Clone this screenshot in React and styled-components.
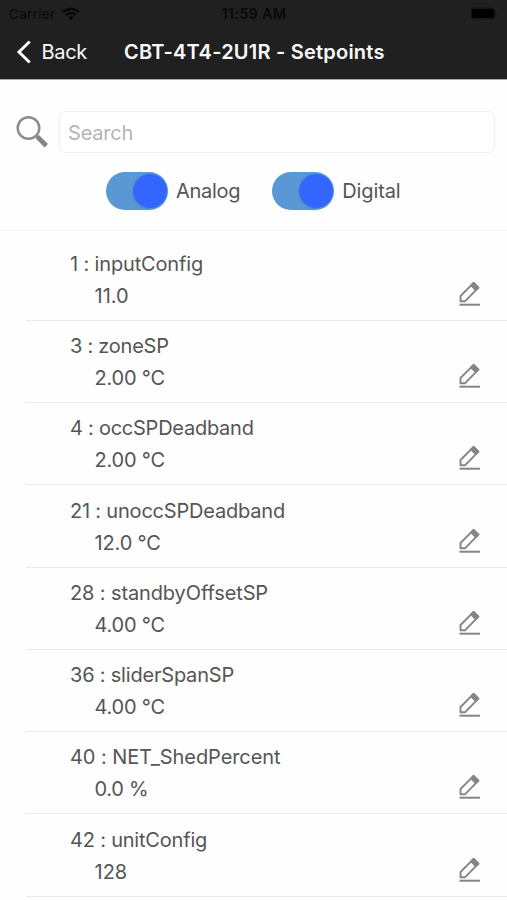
import React from 'react';
import styled, { createGlobalStyle } from 'styled-components';

const GlobalStyle = createGlobalStyle`
  * { box-sizing: border-box; }
  body {
    margin: 0;
    background: #fefefe;
    color: #555;
    font-family: Inter, "Liberation Sans", sans-serif;
    overflow: hidden;
  }
`;

const Screen = styled.main`
  display: flex;
  flex-direction: column;
  height: 900px;
  overflow: hidden;
`;

const Header = styled.header`
  flex: none;
  height: 79px;
  background: #202020;
  box-shadow: 0 1px 0 #a9a9a9;
`;

const StatusBar = styled.div`
  display: grid;
  grid-template-columns: 1fr auto 1fr;
  align-items: center;
  height: 27px;
  padding: 0 8px 0 9px;
  color: #080808;
  font-size: 13px;
`;

const Carrier = styled.div`
  display: flex;
  align-items: center;
  gap: 7px;
  font-size: 13.5px;
  letter-spacing: 0.3px;
`;

const Clock = styled.div`
  font-size: 14px;
  font-weight: 600;
  letter-spacing: 0.5px;
`;

const BatteryIcon = styled.svg`
  justify-self: end;
`;

const NavBar = styled.div`
  display: flex;
  align-items: center;
  height: 50px;
  padding-left: 16px;
  color: #fafafa;
`;

const BackButton = styled.button`
  display: flex;
  align-items: center;
  gap: 9.5px;
  width: 108px;
  padding: 0;
  border: 0;
  background: none;
  color: inherit;
  font: 400 20px/30px Inter, sans-serif;
  letter-spacing: -0.3px;
`;

const Title = styled.h1`
  margin: 0;
  font-size: 20px;
  font-weight: 600;
  line-height: 30px;
  letter-spacing: 0.22px;
  white-space: nowrap;
`;

const Filters = styled.section`
  flex: none;
  height: 152px;
  padding-top: 32px;
  border-bottom: 1px solid #f4f4f4;
`;

const SearchRow = styled.label`
  display: flex;
  align-items: center;
  gap: 11px;
  padding: 0 12px 0 16px;
`;

const SearchInput = styled.input`
  flex: 1;
  min-width: 0;
  height: 42px;
  padding: 1px 8px 0;
  border: 1px solid #efefef;
  border-radius: 7px;
  outline: 0;
  background: #fff;
  font: 400 20px/30px Inter, sans-serif;
  letter-spacing: -0.2px;
  &::placeholder { color: #b5b5b5; opacity: 1; }
`;

const Toggles = styled.div`
  display: flex;
  gap: 32px;
  padding: 19px 0 0 106px;
`;

const ToggleLabel = styled.div`
  display: flex;
  align-items: center;
  gap: 8px;
  font-size: 20px;
  line-height: 38px;
  letter-spacing: ${({ $spacing }) => $spacing}px;
`;

const Switch = styled.span`
  display: flex;
  align-items: center;
  justify-content: flex-end;
  width: 62px;
  height: 38px;
  padding-right: 1px;
  border-radius: 19px;
  background: #5998d4;
`;

const Knob = styled.span`
  width: 34px;
  height: 34px;
  border-radius: 50%;
  background: #3366ff;
  box-shadow: 0 1px 3px #2864b055;
`;

const List = styled.ul`
  margin: 0;
  padding: 7.6px 0 0 26px;
  list-style: none;
`;

const Row = styled.li`
  display: flex;
  justify-content: space-between;
  height: 82.25px;
  padding: 9.2px 26px 0 44px;
  border-bottom: 1px solid #e9e9e9;
`;

const Name = styled.div`
  font-size: 20px;
  line-height: 32.1px;
  white-space: pre;
  letter-spacing: ${({ $spacing }) => $spacing}px;
`;

const Value = styled(Name)`
  padding-left: 24.5px;
`;

const EditButton = styled.button`
  align-self: flex-start;
  display: flex;
  margin-top: 33px;
  padding: 0;
  border: 0;
  background: none;
`;

const setpoints = [
  { name: '1 : inputConfig', value: '11.0', ns: -0.15, vs: 0 },
  { name: '3 : zoneSP', value: '2.00 °C', ns: -0.25, vs: -0.2 },
  { name: '4 : occSPDeadband', value: '2.00 °C', ns: -0.25, vs: -0.2 },
  { name: '21 : unoccSPDeadband', value: '12.0 °C', ns: -0.2, vs: -0.15 },
  { name: '28 : standbyOffsetSP', value: '4.00 °C', ns: -0.12, vs: -0.2 },
  { name: '36 : sliderSpanSP', value: '4.00 °C', ns: -0.2, vs: -0.2 },
  { name: '40 : NET_ShedPercent', value: '0.0 %', ns: -0.08, vs: -0.3 },
  { name: '42 : unitConfig', value: '128', ns: -0.2, vs: 0 },
];

const WifiIcon = () => (
  <svg width="18" height="14" viewBox="0 0 18 14" fill="none" stroke="#080808" strokeWidth="2.5">
    <path d="M1 5.2C5.5 .8 12.5 .8 17 5.2" />
    <path d="M4 8.2C6.8 5.5 11.2 5.5 14 8.2" />
    <path d="M6.2 10.4C7.8 8.8 10.2 8.8 11.8 10.4L9 13.3Z" fill="#080808" stroke="none" />
  </svg>
);

const SearchIcon = () => (
  <svg width="32" height="32" viewBox="0 0 32 32" fill="none">
    <circle cx="12.5" cy="12" r="10.8" stroke="#8b8b8b" strokeWidth="2.4" />
    <path d="M20 19.5L22 21.5" stroke="#8b8b8b" strokeWidth="3" />
    <path d="M21.3 20.8L30.3 29.8" stroke="#858585" strokeWidth="4.8" />
  </svg>
);

const EditIcon = () => (
  <svg width="22" height="26" viewBox="0 0 22 26" fill="none" stroke="#858585">
    <path d="M1.5 20.2V15L14.6 1.8L19.4 6.6L6.2 20.2Z" strokeWidth="1.9" strokeLinejoin="round" />
    <path d="M12 4.4L14.6 1.8L19.4 6.6L16.8 9.2Z" fill="#858585" strokeWidth="1.7" strokeLinejoin="round" />
    <path d="M.5 23.7H21" strokeWidth="2" />
  </svg>
);

const Toggle = ({ label, spacing }) => (
  <ToggleLabel $spacing={spacing}>
    <Switch role="switch" aria-checked="true" aria-label={label}><Knob /></Switch>
    {label}
  </ToggleLabel>
);

export default function App() {
  return (
    <Screen>
      <GlobalStyle />
      <Header>
        <StatusBar>
          <Carrier>Carrier <WifiIcon /></Carrier>
          <Clock>11:59 AM</Clock>
          <BatteryIcon width="29" height="13" viewBox="0 0 29 13">
            <rect x=".5" y=".5" width="25" height="12" rx="3.5" fill="#151515" />
            <rect x="2" y="2" width="22" height="9" rx="2" fill="#000" />
            <path d="M27 4.5Q29 6.5 27 8.5Z" fill="#151515" />
          </BatteryIcon>
        </StatusBar>
        <NavBar>
          <BackButton>
            <svg width="16" height="24" viewBox="0 0 16 24" fill="none" stroke="#fff" strokeWidth="2.9">
              <path d="M13.7 1.5L3 12L13.7 22.5" />
            </svg>
            Back
          </BackButton>
          <Title>CBT-4T4-2U1R - Setpoints</Title>
        </NavBar>
      </Header>
      <Filters>
        <SearchRow>
          <SearchIcon />
          <SearchInput placeholder="Search" />
        </SearchRow>
        <Toggles>
          <Toggle label="Analog" spacing={-0.3} />
          <Toggle label="Digital" spacing={-0.1} />
        </Toggles>
      </Filters>
      <List>
        {setpoints.map(({ name, value, ns, vs }) => (
          <Row key={name}>
            <div>
              <Name $spacing={ns}>{name}</Name>
              <Value $spacing={vs}>{value}</Value>
            </div>
            <EditButton aria-label={`Edit ${name}`}><EditIcon /></EditButton>
          </Row>
        ))}
      </List>
    </Screen>
  );
}
